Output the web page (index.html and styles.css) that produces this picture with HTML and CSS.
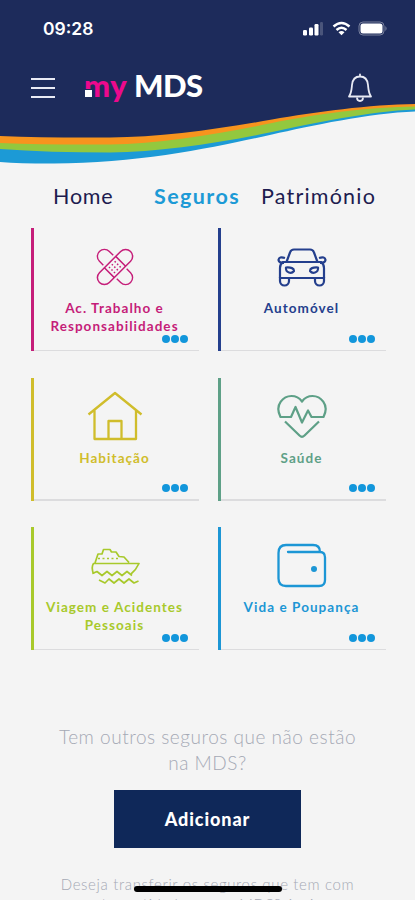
FILE: index.html
```html
<!DOCTYPE html>
<html lang="pt">
<head>
  <meta charset="UTF-8" />
  <meta name="viewport" content="width=device-width,initial-scale=1.0" />
  <title>myMDS - Seguros</title>
  <link rel="stylesheet" href="styles.css">
</head>
<body>
  <!-- Header with the coloured wave behind it -->
  <header class="header">
    <svg class="wave" viewBox="0 0 415 170" aria-hidden="true">
      <path fill="#1c9ad6" d="M0 0H415V111.500C370 113 310 126 272 134.500C220 146 140 164 50 163.500Q20 163.500 0 162Z"/>
      <path fill="#93c83e" d="M0 0H415V109.500C370 111 310 124 272 132C220 143 160 152 110 152.500Q50 152.500 0 149Z"/>
      <path fill="#f7941e" d="M0 0H415V106.500C370 107 315 114 272 123C220 134 160 144 110 144.500Q50 145 0 143Z"/>
      <path fill="#1d2b5b" d="M0 0H415V104C370 104.500 315 112 272 119.500C220 129 160 137.500 110 137.500Q50 138 0 136Z"/>
    </svg>

    <div class="status-bar">
      <span class="clock">09:28</span>
      <div class="status-icons">
        <svg width="22" height="15" viewBox="0 0 22 15">
          <g fill="#fff">
            <rect x="0" y="9" width="4" height="5.500" rx="1.200"/>
            <rect x="6" y="6.500" width="4" height="8" rx="1.200"/>
            <rect x="11.500" y="3" width="4" height="11.500" rx="1.200"/>
            <rect x="17" y="1" width="3" height="13.500" rx="1.200" opacity=".2"/>
          </g>
        </svg>
        <svg width="19" height="15" viewBox="0 0 19 15">
          <path d="M1.500 5.500Q9.500-1.500 17.500 5.500M4.500 9Q9.500 4.500 14.500 9" fill="none" stroke="#fff" stroke-width="2.500"/>
          <path d="M6.500 11.200Q9.500 8.800 12.500 11.200L9.500 14.300Z" fill="#fff"/>
        </svg>
        <svg width="30" height="15" viewBox="0 0 30 15">
          <rect x="1" y="1" width="25" height="13" rx="4" fill="none" stroke="#fff" opacity=".4"/>
          <rect x="2.500" y="2.500" width="22" height="10" rx="2.500" fill="#fff"/>
          <path d="M27.500 5v5q2-2.500 0-5z" fill="#fff" opacity=".5"/>
        </svg>
      </div>
    </div>

    <div class="top-bar">
      <div class="hamburger"><span></span><span></span><span></span></div>
      <div class="logo"><span class="logo-my">my</span><span class="logo-mds">MDS</span></div>
      <svg class="bell" width="26" height="30" viewBox="0 0 26 30">
        <path d="M13 1.500v2M2 23.500C4.500 20 4.500 17.500 5 12C5.500 6.500 8.500 3.500 13 3.500S20.500 6.500 21 12C21.500 17.500 21.500 20 24 23.500Z" fill="none" stroke="#e8eaf4" stroke-width="1.800" stroke-linejoin="round" stroke-linecap="round"/>
        <path d="M10 24.500Q10 28 13 28T16 24.500" fill="none" stroke="#e8eaf4" stroke-width="1.800"/>
      </svg>
    </div>
  </header>

  <nav class="tabs">
    <a class="tab tab-home">Home</a>
    <a class="tab tab-seguros active">Seguros</a>
    <a class="tab tab-patrimonio">Património</a>
  </nav>

  <main>
    <div class="cards">
      <div class="card pink">
        <svg class="icon" viewBox="0 0 60 52">
          <g transform="rotate(45 30 27)" stroke-width="1.400">
            <path d="M20.500 20H15a7 7 0 0 0 0 14H20.500M39.500 20H45a7 7 0 0 1 0 14H39.500"/>
          </g>
          <g transform="rotate(-45 30 27)" stroke-width="1.500">
            <rect x="8" y="20" width="44" height="14" rx="7"/>
            <path d="M22 20v14M38 20v14"/>
            <path d="M25 23.500h12M25 27h12M25 30.500h12" stroke-dasharray="1.500 2.500"/>
          </g>
        </svg>
        <p>Ac. Trabalho e<br>Responsabilidades</p>
        <div class="dots"><i></i><i></i><i></i></div>
      </div>

      <div class="card navy">
        <svg class="icon" viewBox="0 0 60 52">
          <path d="M14.500 22L18 12.500Q19 9.500 22 9.500H38Q41 9.500 42 12.500L45.500 22M11 22H49Q52 24 52 28V38H8V28Q8 24 11 22Z"/>
          <path d="M13 18Q7 16 6.500 20Q7 23 12 23M47 18Q53 16 53.500 20Q53 23 48 23M8 37V41a4.500 4.500 0 0 0 9 0V38M52 37V41a4.500 4.500 0 0 1-9 0V38"/>
          <path d="M14 27.500Q22 27 22 31Q20 33.500 17 32.500Q13.500 31.500 14 27.500ZM46 27.500Q38 27 38 31Q40 33.500 43 32.500Q46.500 31.500 46 27.500Z"/>
        </svg>
        <p>Automóvel</p>
        <div class="dots"><i></i><i></i><i></i></div>
      </div>

      <div class="card gold">
        <svg class="icon" viewBox="0 0 60 52">
          <path d="M3.500 24.500L30 3L56.500 24.500M9.500 20V49H51V20M23.500 49V31H36.500V49" stroke-width="2.300"/>
        </svg>
        <p>Habitação</p>
        <div class="dots"><i></i><i></i><i></i></div>
      </div>

      <div class="card green">
        <svg class="icon" viewBox="0 0 60 52">
          <path d="M8.500 27C2 14 12 6 19.500 6Q26 6 30 11.500Q34 6 40.500 6C48 6 58 14 51.500 27H39.500L36 20.500L30 32.500L23.500 17L19 27Z"/>
          <path d="M13 31.500L27.500 45.500Q30 48 32.500 45.500L47 31.500"/>
        </svg>
        <p>Saúde</p>
        <div class="dots"><i></i><i></i><i></i></div>
      </div>

      <div class="card lime">
        <svg class="icon" viewBox="0 0 60 52">
          <g stroke-width="1.700">
            <path d="M8.500 35Q6 28 8.500 24.500H54Q51 31 46 35M10 24L13 15H17L18.500 10.500H25L26.500 13H31L34 17.500L39 18L44 23.500"/>
            <path d="M7.500 34.500L12 32.500L17 36.500L22 32.500L27 36.500L32 32.500L37 36.500L42 32.500L47 36.500"/>
            <path d="M14 41L20 44L24 40L29 44L34 40L39 44L44 40L49 44L53.500 42"/>
            <path d="M13 19.500H35" stroke-dasharray="2 2.500"/>
          </g>
        </svg>
        <p>Viagem e Acidentes<br>Pessoais</p>
        <div class="dots"><i></i><i></i><i></i></div>
      </div>

      <div class="card blue">
        <svg class="icon" viewBox="0 0 60 52">
          <path d="M16 13H48Q53 13 53 18.500V41Q53 47 47 47H14Q6.500 47 6.500 39.500V14Q6.500 6 14 6H41Q48 6 48 13" stroke-width="2.300" stroke-linecap="round"/>
          <circle cx="42" cy="30" r="3" fill="currentColor" stroke="none"/>
        </svg>
        <p>Vida e Poupança</p>
        <div class="dots"><i></i><i></i><i></i></div>
      </div>
    </div>

    <div class="other">
      <p class="question">Tem outros seguros que não estão<br>na MDS?</p>
      <button class="add-button">Adicionar</button>
      <p class="transfer">Deseja transferir os seguros que tem com<br>outra entidade para a MDS? Assine</p>
    </div>
  </main>

  <div class="home-indicator"></div>
</body>
</html>
```
FILE: styles.css
```css
* {
  box-sizing: border-box;
}

body {
  margin: 0;
  height: 900px;
  overflow: hidden;
  position: relative;
  background: #f4f4f4;
  color: #1d1b4f;
  font-family: Lato, sans-serif;
}

p {
  margin: 0;
}

/* Header */
.header {
  position: relative;
  height: 170px;
}

/* wave sits behind the bars */
.wave {
  position: absolute;
  top: 0;
  left: 0;
  width: 415px;
  height: 170px;
  z-index: -1;
}

.status-bar {
  display: flex;
  justify-content: space-between;
  align-items: center;
  height: 56px;
  padding: 0 27px 0 43px;
}

.clock {
  color: #fff;
  font-family: Inter, sans-serif;
  font-size: 17.500px;
  font-weight: 600;
}

.status-icons {
  display: flex;
  gap: 7px;
}

.top-bar {
  display: flex;
  align-items: center;
  height: 62px;
  padding: 0 42px 0 31px;
}

.hamburger {
  display: flex;
  flex-direction: column;
  gap: 7px;
  width: 24px;
  margin-top: 1px;
}
.hamburger span {
  height: 2px;
  background: #e8eaf4;
}

.logo {
  display: flex;
  align-items: baseline;
  position: relative;
  margin: -4px 0 0 29px;
  font-size: 31px;
  font-weight: 900;
  line-height: 40px;
}
/* white dot at the foot of the m */
.logo::before {
  content: "";
  position: absolute;
  left: 1px;
  bottom: 8px;
  width: 7px;
  height: 7px;
  background: #fff;
  border-top: 1px solid #1d2b5b;
  border-right: 1px solid #1d2b5b;
}
.logo-my {
  color: #ec098d;
  width: 50px;
  letter-spacing: 0.500px;
}
.logo-mds {
  color: #fff;
  letter-spacing: -0.500px;
}

.bell {
  margin: 2px 0 0 auto;
}

/* Tabs */
.tabs {
  display: flex;
  height: 58px;
  padding: 12px 0 0 53px;
  font-size: 21.500px;
  line-height: 28px;
}
.tab {
  white-space: nowrap;
  letter-spacing: 1.200px;
}
.tab-home {
  width: 101px;
  letter-spacing: 0.800px;
}
.tab-seguros {
  width: 107px;
  letter-spacing: 1.400px;
}
.tab.active {
  color: #1c9ad6;
  font-weight: 700;
}

/* Cards */
.cards {
  display: grid;
  grid-template-columns: 168px 168px;
  gap: 26.500px 19px;
  padding-left: 31px;
}

.card {
  position: relative;
  height: 123px;
  padding: 12px 4px 0 0;
  border-left: 3px solid currentColor;
  text-align: center;
}
.card::after {
  content: "";
  position: absolute;
  left: 0;
  right: 0;
  bottom: 0;
  height: 1.500px;
  background: #dcdcde;
}
.card p {
  margin-top: 8px;
  font-size: 13.500px;
  font-weight: 700;
  line-height: 17.500px;
  letter-spacing: 1.050px;
  white-space: nowrap;
}

.icon {
  display: block;
  width: 60px;
  height: 52px;
  margin: 0 auto;
  fill: none;
  stroke: currentColor;
  stroke-width: 2.200;
  stroke-linejoin: round;
}

.pink { color: #c51d79; }
.navy { color: #243f8d; }
.gold { color: #d0bd2b; }
.green { color: #5ea087; }
.lime { color: #a8c92b; }
.blue { color: #1c96d5; }

.dots {
  position: absolute;
  right: 11px;
  bottom: 8.500px;
  display: flex;
  gap: 1px;
}
.dots i {
  width: 8px;
  height: 8px;
  border-radius: 50%;
  background: #1296db;
}

/* Other insurance */
.other {
  display: flex;
  flex-direction: column;
  align-items: center;
  padding-top: 74px;
  text-align: center;
  white-space: nowrap;
  color: #a5a9b5;
  font-weight: 300;
}
.question {
  font-size: 19px;
  line-height: 26px;
  letter-spacing: 0.520px;
}

.add-button {
  width: 187px;
  height: 58px;
  margin: 14px 0 26px;
  border: 0;
  background: #0f2859;
  color: #fff;
  font-family: Lato, sans-serif;
  font-size: 18px;
  font-weight: 900;
  letter-spacing: 0.900px;
}

.transfer {
  font-size: 15px;
  line-height: 20px;
  letter-spacing: 0.640px;
}

/* iOS bar over the content */
.home-indicator {
  position: absolute;
  left: 134px;
  bottom: 8px;
  width: 148px;
  height: 6px;
  border-radius: 3px;
  background: #000;
}
```
